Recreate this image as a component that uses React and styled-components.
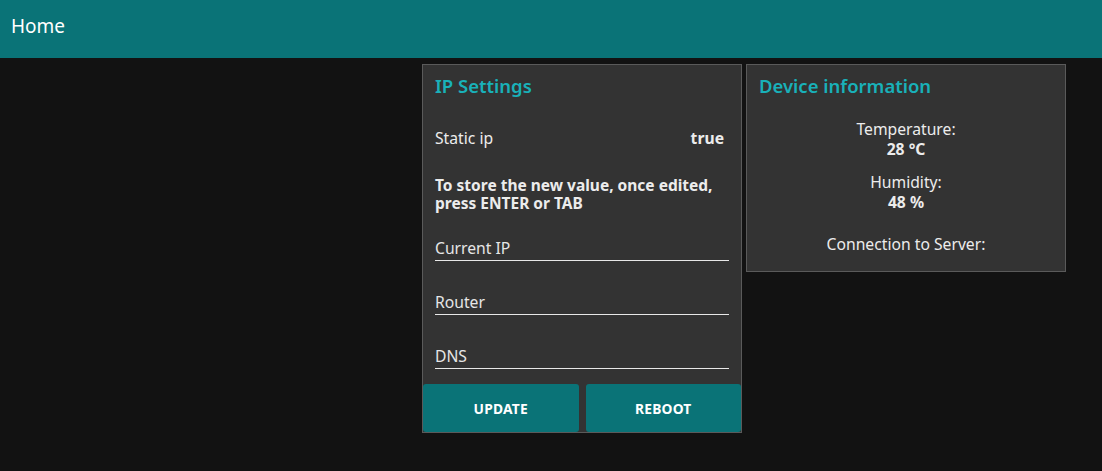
import React from 'react';
import styled, { createGlobalStyle } from 'styled-components';

const GlobalStyle = createGlobalStyle`
  body {
    margin: 0;
    background: #121212;
    color: #ececec;
    font-family: "Noto Sans", "Open Sans", sans-serif;
  }
`;

const App = () => {
  return (
    <Page>
      <GlobalStyle />
      <TopBar>Home</TopBar>
      <Board>
        <Card>
          <CardTitle>IP Settings</CardTitle>
          <SettingRow>
            <span>Static ip</span>
            <strong>true</strong>
          </SettingRow>
          <Notice>To store the new value, once edited, press ENTER or TAB</Notice>
          <Fields>
            <Field placeholder="Current IP" />
            <Field placeholder="Router" />
            <Field placeholder="DNS" />
          </Fields>
          <Actions>
            <ActionButton>UPDATE</ActionButton>
            <ActionButton>REBOOT</ActionButton>
          </Actions>
        </Card>
        <Card>
          <CardTitle>Device information</CardTitle>
          <InfoList>
            <InfoItem>
              <span>Temperature:</span>
              <strong>28 °C</strong>
            </InfoItem>
            <InfoItem>
              <span>Humidity:</span>
              <strong>48 %</strong>
            </InfoItem>
            <InfoItem $spaced>
              <span>Connection to Server:</span>
            </InfoItem>
          </InfoList>
        </Card>
      </Board>
    </Page>
  );
};

export default App;

const Page = styled.div`
  min-height: 471px;
  background: #121212;
`;

const TopBar = styled.header`
  height: 58px;
  background: #0a7377;
  color: #ffffff;
  font-size: 19px;
  display: flex;
  align-items: center;
  padding: 0 11px 6px;
  box-sizing: border-box;
`;

const Board = styled.main`
  display: flex;
  justify-content: flex-end;
  align-items: flex-start;
  gap: 4px;
  padding: 6px 36px 0 0;
`;

const Card = styled.section`
  width: 320px;
  box-sizing: border-box;
  background: #333333;
  border: 1px solid #5a5a5a;
  display: flex;
  flex-direction: column;
`;

const CardTitle = styled.h2`
  margin: 0;
  padding: 9px 12px 0;
  font-size: 18.5px;
  font-weight: 600;
  color: #19b1b9;
  line-height: 24px;
`;

const SettingRow = styled.div`
  display: flex;
  justify-content: space-between;
  padding: 0 17px 0 12px;
  margin-top: 29px;
  font-size: 15.7px;
  line-height: 22px;
  strong {
    font-weight: 700;
  }
`;

const Notice = styled.p`
  margin: 27px 12px 0;
  font-size: 15.5px;
  font-weight: 700;
  line-height: 18px;
`;

const Fields = styled.div`
  display: flex;
  flex-direction: column;
  gap: 18px;
  padding: 13px 12px 15px;
`;

const Field = styled.input`
  background: transparent;
  border: none;
  border-bottom: 1px solid #e8e8e8;
  color: #ececec;
  font-family: inherit;
  font-size: 15.7px;
  height: 36px;
  padding: 12px 0 2px;
  box-sizing: border-box;
  outline: none;
  &::placeholder {
    color: #e6e6e6;
    opacity: 1;
  }
`;

const Actions = styled.div`
  display: flex;
  gap: 7px;
`;

const ActionButton = styled.button`
  flex: 1;
  height: 48px;
  border: none;
  border-radius: 3px;
  background: #0a7377;
  color: #ffffff;
  font-family: inherit;
  font-size: 13.8px;
  font-weight: 700;
  letter-spacing: 0.2px;
`;

const InfoList = styled.div`
  display: flex;
  flex-direction: column;
  align-items: center;
  padding: 21px 12px 17px;
  font-size: 15.7px;
  line-height: 20px;
  gap: 13px;
`;

const InfoItem = styled.div`
  display: flex;
  flex-direction: column;
  align-items: center;
  margin-top: ${p => (p.$spaced ? '9px' : '0')};
  strong {
    font-weight: 700;
  }
`;
